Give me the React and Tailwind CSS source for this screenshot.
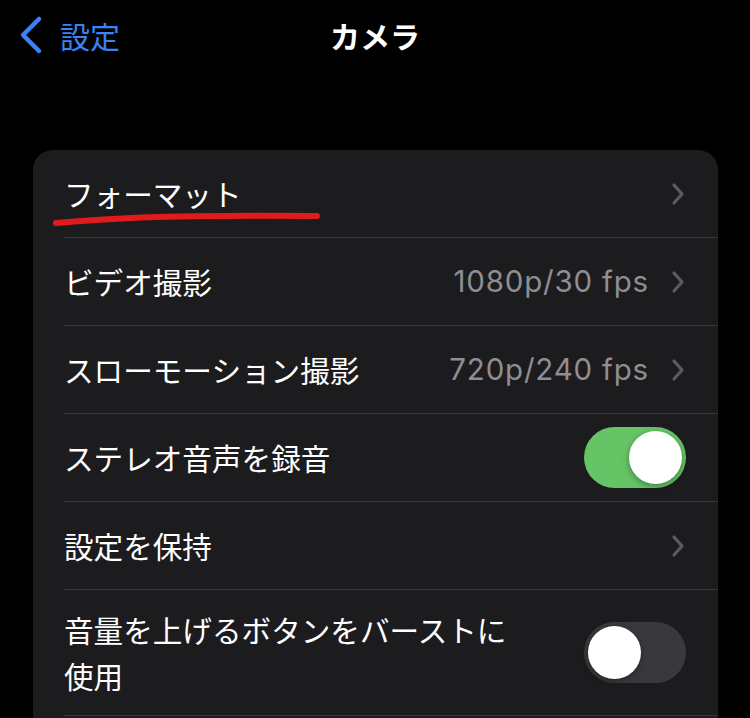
const jp = { fontFamily: '"Noto Sans CJK JP", "Noto Sans", sans-serif' };

function Chevron() {
  return (
    <svg width="16" height="24" viewBox="0 0 16 24" className="shrink-0">
      <path d="M4 3 L12 12 L4 21" fill="none" stroke="#5c5c60" strokeWidth="3.2" strokeLinecap="round" strokeLinejoin="round" />
    </svg>
  );
}

function Toggle({ on }) {
  return (
    <div className={`w-[102px] h-[61px] rounded-full p-[4px] flex shrink-0 ${on ? "bg-[#65c466] justify-end" : "bg-[#39393d] justify-start"}`}>
      <div className="w-[53px] h-[53px] rounded-full bg-white shadow-[0_2px_6px_rgba(0,0,0,0.35)]" />
    </div>
  );
}

function Row({ label, value, chevron, toggle, tall }) {
  return (
    <div className={`ml-[31px] pr-[32px] flex items-center border-b border-[#38383a] ${tall ? "h-[126px]" : "h-[88px]"}`}>
      <div className={`text-white text-[29.6px] leading-[46px] ${tall ? "w-[470px]" : "flex-1"}`} style={jp}>
        {label}
      </div>
      {tall && <div className="flex-1" />}
      {value && (
        <span className="text-[#8e8e93] text-[29.5px] mr-[21px] font-['Inter',sans-serif] tracking-[0.8px]">{value}</span>
      )}
      {chevron && <Chevron />}
      {toggle !== undefined && <Toggle on={toggle} />}
    </div>
  );
}

export default function App() {
  return (
    <div className="w-[750px] h-[718px] bg-black overflow-hidden">
      {/* Nav bar */}
      <div className="relative h-[70px] flex items-center">
        <div className="flex items-center pl-[18px] gap-[16px]">
          <svg width="26" height="40" viewBox="0 0 26 40">
            <path d="M21 4 L5 20 L21 36" fill="none" stroke="#3a83f5" strokeWidth="4.5" strokeLinecap="round" strokeLinejoin="round" />
          </svg>
          <span className="text-[#3a83f5] text-[30px] leading-none" style={jp}>設定</span>
        </div>
        <div className="absolute left-0 right-0 top-0 h-[70px] flex items-center justify-center pointer-events-none">
          <span className="text-white text-[30px] font-bold leading-none" style={jp}>カメラ</span>
        </div>
      </div>

      {/* Settings group */}
      <div className="relative mt-[80px] ml-[33px] mr-[32px] bg-[#1c1c1e] rounded-[20px]">
        <Row label="フォーマット" chevron />
        <Row label="ビデオ撮影" value="1080p/30 fps" chevron />
        <Row label="スローモーション撮影" value="720p/240 fps" chevron />
        <Row label="ステレオ音声を録音" toggle={true} />
        <Row label="設定を保持" chevron />
        <Row label="音量を上げるボタンをバーストに使用" toggle={false} tall />
        <div className="h-[40px]" />

        {/* hand-drawn red underline */}
        <svg className="absolute left-0 top-0 pointer-events-none" width="320" height="90" viewBox="0 0 320 90">
          <path d="M23 73 Q110 64 284 66" fill="none" stroke="#e11b1d" strokeWidth="6" strokeLinecap="round" />
        </svg>
      </div>
    </div>
  );
}
